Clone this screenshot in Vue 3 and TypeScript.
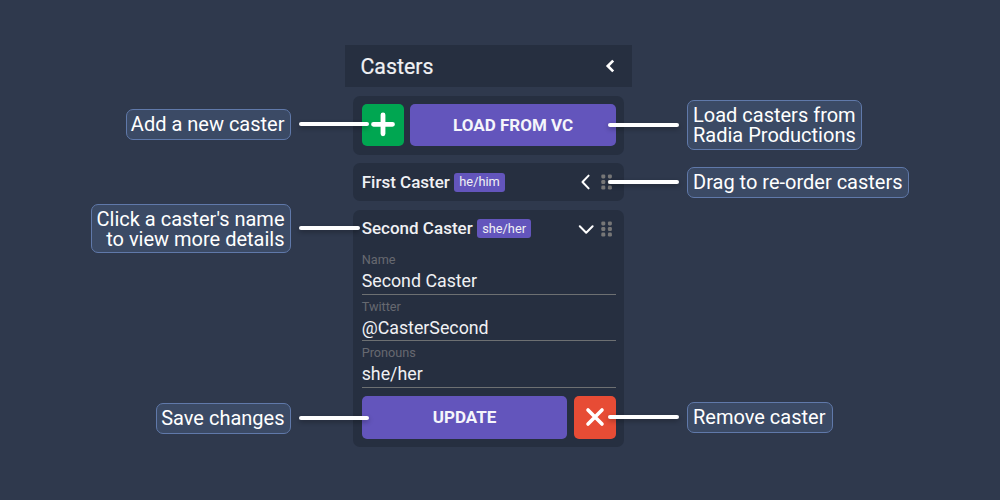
<script setup lang="ts">
interface Callout {
  lines: string[]
  side: 'left' | 'right'
  top: number
  width: number
  lineY: number
  lineLength: number
}

const callouts: Callout[] = [
  { lines: ['Add a new caster'], side: 'left', top: 109, width: 165, lineY: 124, lineLength: 70.5 },
  { lines: ["Click a caster's name", 'to view more details'], side: 'left', top: 203.5, width: 200, lineY: 228, lineLength: 61.5 },
  { lines: ['Save changes'], side: 'left', top: 402.5, width: 135, lineY: 417.5, lineLength: 70.5 },
  { lines: ['Load casters from', 'Radia Productions'], side: 'right', top: 100, width: 175, lineY: 125, lineLength: 71 },
  { lines: ['Drag to re-order casters'], side: 'right', top: 167, width: 222, lineY: 182, lineLength: 71 },
  { lines: ['Remove caster'], side: 'right', top: 402, width: 145.5, lineY: 417, lineLength: 71 },
]

const fields = [
  { label: 'Name', value: 'Second Caster' },
  { label: 'Twitter', value: '@CasterSecond' },
  { label: 'Pronouns', value: 'she/her' },
]

const dots = [0, 1, 2].flatMap((r) => [0, 1].map((c) => ({ x: 2.3 + c * 6.6, y: 2.4 + r * 5.6 })))
</script>

<template>
  <main class="scene">
    <section class="panel">
      <header class="panel-header">
        <span>Casters</span>
        <svg class="header-chevron" width="12" height="14" viewBox="0 0 12 14"><path d="M9.2 1.6 3.8 7l5.4 5.4" /></svg>
      </header>
      <div class="cards">
        <div class="card actions">
          <button class="btn square green">
            <svg width="26" height="26" viewBox="0 0 26 26"><path d="M13 3.8v19M3.5 13.3h19" /></svg>
          </button>
          <button class="btn wide">LOAD FROM VC</button>
        </div>
        <div class="card first">
          <div class="caster-head">
            <span class="caster-name">First Caster</span>
            <span class="badge">he/him</span>
            <svg class="chevron" width="16" height="16" viewBox="0 0 16 16"><path d="M10.6 1.6 4.5 8l6.1 6.4" /></svg>
            <svg class="grip" width="12" height="16" viewBox="0 0 12 16">
              <rect v-for="(d, i) in dots" :key="i" :x="d.x - 2" :y="d.y - 2" width="4" height="4" rx="1.3" />
            </svg>
          </div>
        </div>
        <div class="card second">
          <div class="caster-head">
            <span class="caster-name">Second Caster</span>
            <span class="badge">she/her</span>
            <svg class="chevron" width="16" height="16" viewBox="0 0 16 16"><path d="M1.8 5.3 8.2 11.8l6.4-6.5" /></svg>
            <svg class="grip" width="12" height="16" viewBox="0 0 12 16">
              <rect v-for="(d, i) in dots" :key="i" :x="d.x - 2" :y="d.y - 2" width="4" height="4" rx="1.3" />
            </svg>
          </div>
          <div v-for="f in fields" :key="f.label" class="field">
            <div class="field-label">{{ f.label }}</div>
            <div class="field-value">{{ f.value }}</div>
          </div>
          <div class="actions footer">
            <button class="btn wide">UPDATE</button>
            <button class="btn square red">
              <svg width="20" height="20" viewBox="0 0 20 20"><path d="m3 3 14 14M17 3 3 17" /></svg>
            </button>
          </div>
        </div>
      </div>
    </section>

    <template v-for="c in callouts" :key="c.lines[0]">
      <div class="callout" :class="[c.side, { double: c.lines.length > 1 }]" :style="{ top: c.top + 'px', width: c.width + 'px' }">
        <div v-for="l in c.lines" :key="l" class="callout-line">{{ l }}</div>
      </div>
      <div class="pointer" :class="c.side" :style="{ top: c.lineY - 2 + 'px', width: c.lineLength + 'px' }"></div>
    </template>
  </main>
</template>

<style>
body {
  background: #2f394d;
}
</style>

<style scoped>
.scene {
  position: relative;
  width: 1000px;
  height: 500px;
  overflow: hidden;
  box-sizing: border-box;
  padding: 45px 0 0 345px;
  background: #2f394d;
  color: #f0f1f4;
  font-family: Roboto, sans-serif;
}
.scene * {
  box-sizing: border-box;
}
.panel {
  width: 287.4px;
}
.panel-header {
  display: flex;
  align-items: center;
  justify-content: space-between;
  height: 42px;
  padding: 0 16.6px 0 15.5px;
  background: #262f40;
  font-size: 21.3px;
  -webkit-text-stroke: 0.2px #f0f1f4;
}
svg {
  display: block;
  fill: none;
  stroke: #fff;
  stroke-linecap: round;
  stroke-linejoin: round;
}
.header-chevron {
  stroke-width: 2.7;
  stroke-linecap: butt;
  stroke-linejoin: miter;
}
.cards {
  display: flex;
  flex-direction: column;
  gap: 8.5px;
  padding: 8.5px 8px 0 8.3px;
}
.card {
  border-radius: 7px;
  background: #262f40;
  padding: 0 8.5px 0 8.4px;
}
.actions {
  display: flex;
  align-items: center;
  gap: 6.3px;
}
.card.actions {
  height: 59px;
}
.card.first {
  height: 38px;
}
.card.second {
  height: 237px;
}
.btn {
  display: flex;
  align-items: center;
  justify-content: center;
  height: 42.5px;
  padding: 0 0 1px;
  border: 0;
  border-radius: 5px;
  background: #6355bc;
  color: #f5f5fb;
  font: 700 17px Roboto, sans-serif;
}
.wide {
  flex: 1;
}
.square {
  width: 42.3px;
}
.green {
  background: #00a651;
}
.green svg {
  stroke-width: 4.8;
  margin-top: -2px;
}
.red {
  background: #e74c35;
}
.red svg {
  stroke-width: 3.6;
}
.caster-head {
  display: flex;
  align-items: center;
  height: 38px;
}
.caster-name {
  margin-top: -1px;
  font-size: 17px;
  font-weight: 500;
  white-space: nowrap;
}
.badge {
  height: 19px;
  margin-left: 4.3px;
  padding: 0 5.2px;
  border-radius: 3px;
  background: #6355bc;
  font-size: 12.8px;
  line-height: 18.5px;
}
.second .badge {
  line-height: 19px;
}
.chevron {
  margin-left: auto;
  stroke-width: 2;
}
.grip {
  margin-left: 7px;
  margin-right: 3px;
  fill: #777;
  stroke: none;
}
.field {
  height: 46.7px;
  border-bottom: 1px solid #6d7072;
}
.field:nth-child(2) {
  height: 47px;
}
.field:nth-child(4) {
  height: 46.4px;
}
.field-label {
  padding-top: 3px;
  color: #666970;
  font-size: 12.7px;
  line-height: 17px;
}
.field-value {
  font-size: 17.8px;
  line-height: 26.5px;
}
.footer {
  margin-top: 8.6px;
}
.callout {
  position: absolute;
  padding: 4px 5.5px 5px;
  border: 1px solid #6079aa;
  border-radius: 7px;
  background: #3b4a65;
  color: #fff;
  font-size: 20px;
  line-height: 20px;
  white-space: nowrap;
}
.callout.double {
  padding-bottom: 3.5px;
}
.callout.left {
  right: 709px;
  padding-right: 5.5px;
  text-align: right;
}
.callout.left .callout-line {
  display: flex;
  justify-content: flex-end;
}
.callout.right {
  left: 687px;
  padding-left: 5px;
}
.pointer {
  position: absolute;
  height: 4px;
  border-radius: 2px;
  background: #fff;
  box-shadow: 0 2px 5px rgba(0, 0, 0, 0.3);
}
.pointer.left {
  left: 298.5px;
}
.pointer.right {
  right: 321px;
}
</style>
